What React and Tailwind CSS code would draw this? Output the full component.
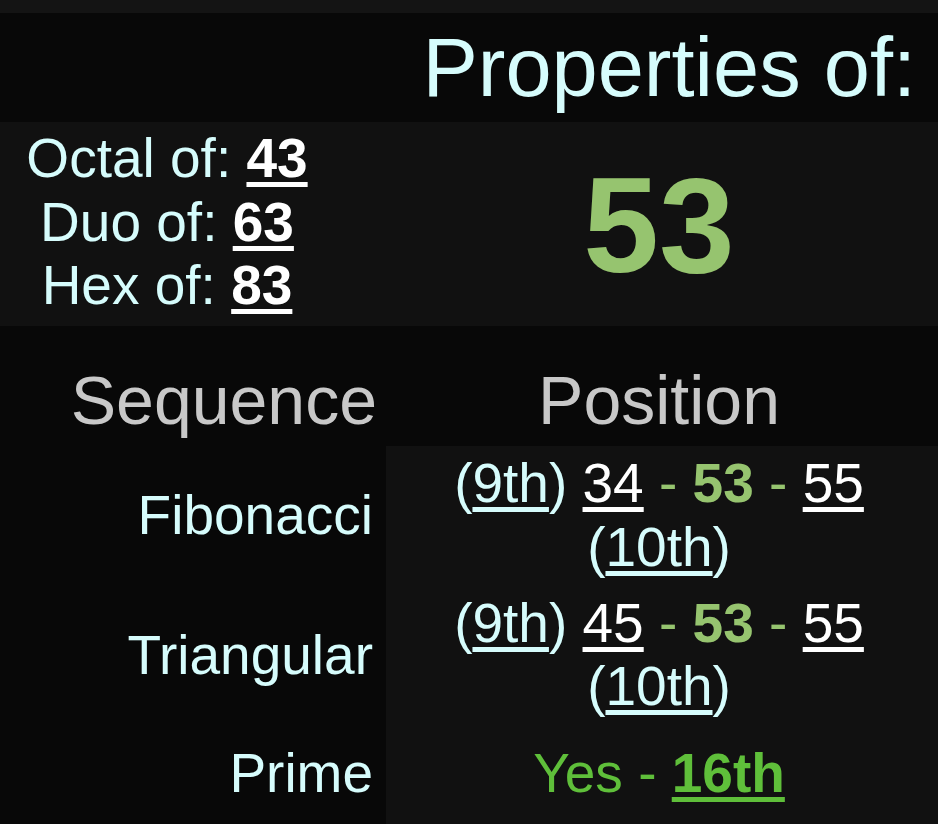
import React from "react";

const CYAN = "text-[#d6fcfc]";

function Ordinal({ n }) {
  return (
    <span className={CYAN}>
      (<span className="underline underline-offset-[5px]">{n}</span>)
    </span>
  );
}

function Neighbours({ prev, next, below, above }) {
  return (
    <>
      <Ordinal n={below} />{" "}
      <span className="text-white underline underline-offset-[5px]">{prev}</span>
      <span className="text-[#96c46f]"> - <b>53</b> - </span>
      <span className="text-white underline underline-offset-[5px]">{next}</span>{" "}
      <Ordinal n={above} />
    </>
  );
}

export default function App() {
  return (
    <div className="min-h-[824px] bg-[#141414] pt-[13px] font-['Liberation_Sans',Arial,sans-serif]">
      {/* Title */}
      <div className="bg-[#080808] pt-[7px] pb-[7px] pr-[22px] text-right text-[83px] leading-[1.15] text-[#d6fcfc]">
        Properties of:
      </div>

      {/* Bases + number */}
      <div className="flex h-[204px] bg-[#111111]">
        <div className="w-[380px] pr-[46px] pt-[5px] text-center text-[55px] leading-[63.25px] text-[#d6fcfc]">
          <div>Octal of: <b className="text-white underline underline-offset-[5px]">43</b></div>
          <div>Duo of: <b className="text-white underline underline-offset-[5px]">63</b></div>
          <div>Hex of: <b className="text-white underline underline-offset-[5px]">83</b></div>
        </div>
        <div className="flex flex-1 items-center justify-center pt-[2px]">
          <span className="text-[136px] font-bold leading-none text-[#96c46f]">53</span>
        </div>
      </div>

      {/* Sequence table */}
      <div className="grid h-[498px] grid-cols-[386px_1fr] grid-rows-[120px_auto_auto_1fr] bg-[#080808] text-[55px] leading-[63.25px]">
        <div className="self-end pb-[7px] pr-[9px] text-right text-[68px] leading-[1.15] text-[#c8c8c8]">Sequence</div>
        <div className="self-end pb-[7px] pr-[6px] text-center text-[68px] leading-[1.15] text-[#c8c8c8]">Position</div>

        <div className="flex items-center justify-end pr-[13px] pt-[6px] pb-[6px] text-[#d6fcfc]">Fibonacci</div>
        <div className="bg-[#111111] pr-[6px] pt-[6px] pb-[6px] text-center">
          <Neighbours below="9th" prev="34" next="55" above="10th" />
        </div>

        <div className="flex items-center justify-end pr-[13px] pt-[7px] pb-[12px] text-[#d6fcfc]">Triangular</div>
        <div className="bg-[#111111] pr-[6px] pt-[7px] pb-[12px] text-center">
          <Neighbours below="9th" prev="45" next="55" above="10th" />
        </div>

        <div className="pr-[13px] pt-[11.5px] text-right text-[#d6fcfc]">Prime</div>
        <div className="bg-[#111111] pr-[6px] pt-[11.5px] text-center text-[#5fbf3a]">
          Yes - <b className="underline underline-offset-[5px]">16th</b>
        </div>
      </div>
    </div>
  );
}
